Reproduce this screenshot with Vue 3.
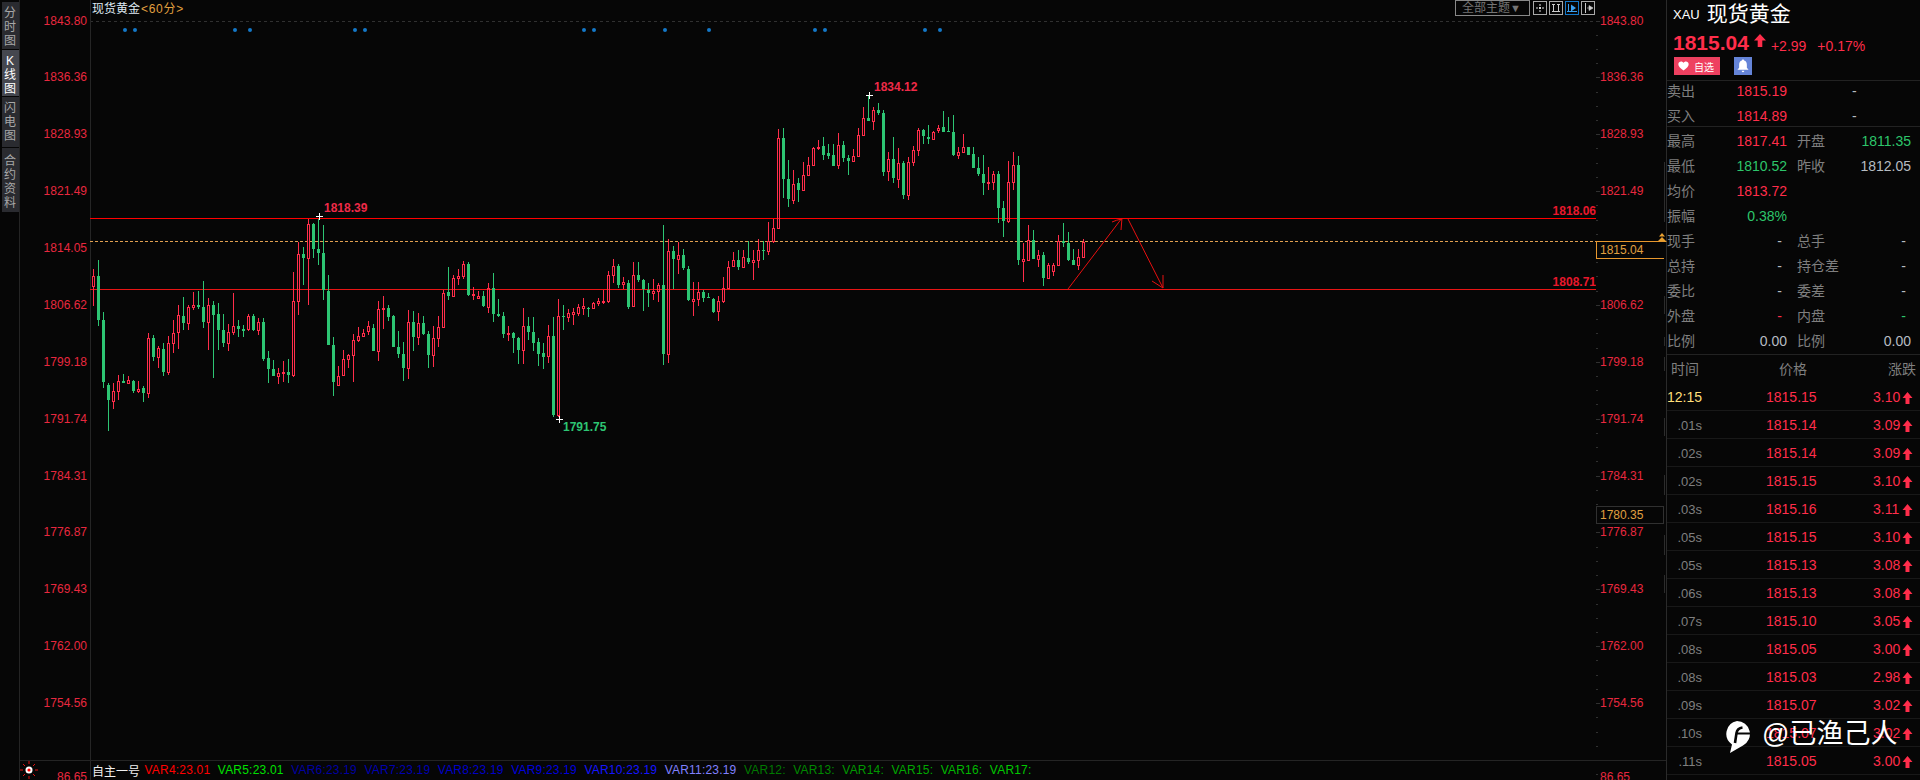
<template>
  <div class="terminal">
    <aside class="tabs">
      <div
        v-for="tab in tabs"
        :key="tab.text"
        class="tab"
        :class="{ active: tab.active, wide: tab.wide }"
        :style="{ height: tab.height + 'px' }"
      >{{ tab.text }}</div>
    </aside>

    <div class="axis axis-left">
      <div v-for="p in priceTicks" :key="p" class="axis-row">{{ p }}</div>
      <div class="axis-tail">86.65</div>
      <svg class="status-dot" width="18" height="18" viewBox="0 0 18 18">
        <circle cx="9" cy="9" r="3.5" fill="#fff" />
        <circle cx="9" cy="9" r="1.6" fill="#f00" />
        <path d="M9 0v3M9 15v3M0 9h3M15 9h3M3 3l2 2M13 13l2 2M15 3l-2 2M5 13l-2 2" stroke="#e01010" fill="none" />
      </svg>
    </div>

    <main class="chart">
      <svg class="plot" width="1506" height="780" viewBox="90 0 1506 780">
        <line x1="90" x2="1596" y1="21.5" y2="21.5" stroke="#303030" stroke-dasharray="3 3" />
        <rect x="90" y="0" width="1" height="780" fill="#252525" />

        <circle v-for="x in signalDots" :key="x" :cx="x" cy="30" r="2" fill="#1478c8" />

        <rect x="90" y="218" width="1506" height="1" fill="#ff0000" />
        <rect x="90" y="289" width="1506" height="1" fill="#e81414" />
        <line x1="90" x2="1596" y1="241.5" y2="241.5" stroke="#e0a050" stroke-dasharray="3 2" />

        <g shape-rendering="crispEdges">
          <g v-for="c in candles" :key="c.x">
            <template v-if="c.up">
              <line :x1="c.x + 0.5" :x2="c.x + 0.5" :y1="c.hi" :y2="c.top" stroke="#ff2d4a" />
              <line :x1="c.x + 0.5" :x2="c.x + 0.5" :y1="c.bot" :y2="c.lo" stroke="#ff2d4a" />
              <rect :x="c.x - 0.5" :y="c.top + 0.5" width="2" :height="c.bot - c.top" fill="none" stroke="#ff2d4a" />
            </template>
            <template v-else>
              <line :x1="c.x + 0.5" :x2="c.x + 0.5" :y1="c.hi" :y2="c.lo" stroke="#2dc573" />
              <rect :x="c.x - 1" :y="c.top" width="3" :height="Math.max(c.bot - c.top, 1)" fill="#2dc573" />
            </template>
          </g>
        </g>

        <g stroke="#e81010" fill="none">
          <path d="M1068 289L1122 218M1112 222Q1116 220 1122 219M1122 218L1121 230" />
          <path d="M1128 219L1163 288M1152 281L1163 288M1163 275V288" />
        </g>

        <g stroke="#fff" shape-rendering="crispEdges">
          <path d="M316 216.500h7M319.500 213v7" />
          <path d="M866 95.500h7M869.500 92v7" />
          <path d="M556 419.500h7M559.500 416v7" />
        </g>

        <rect v-for="t in leftTicks" :key="t.y" :x="90 - t.w" :y="t.y" :width="t.w" height="1" fill="#303030" />

        <text x="324" y="212" class="mark red">1818.39</text>
        <text x="874" y="91" class="mark red">1834.12</text>
        <text x="563" y="431" class="mark green">1791.75</text>
        <text x="1596" y="215" text-anchor="end" class="mark line-label">1818.06</text>
        <text x="1596" y="286" text-anchor="end" class="mark line-label">1808.71</text>
      </svg>

      <div class="chart-title">
        <span class="symbol">现货黄金</span>
        <span class="period">&lt;60分&gt;</span>
      </div>

      <div class="toolbar">
        <div class="theme-btn">全部主题<span class="caret">▼</span></div>
        <svg class="tool" width="14" height="14" viewBox="0 0 14 14">
          <rect x="0.5" y="0.5" width="13" height="13" fill="none" stroke="#aaa" />
          <path d="M7 3v2M7 9v2M3 7h2M9 7h2" stroke="#ddd" />
          <rect x="6" y="6" width="2" height="2" fill="#ddd" />
        </svg>
        <svg class="tool" width="14" height="14" viewBox="0 0 14 14">
          <rect x="0.5" y="0.5" width="13" height="13" fill="none" stroke="#aaa" />
          <path d="M4.500 3v8M9.500 3v8M3 3.500h3M8 3.500h3M3 10.500h8" stroke="#ccc" />
        </svg>
        <svg class="tool" width="14" height="14" viewBox="0 0 14 14">
          <rect x="0.5" y="0.5" width="13" height="13" fill="none" stroke="#1478c8" />
          <path d="M3.500 3v8M2 10.500h10" stroke="#3aa0f0" />
          <path d="M6 3.500l5 3.500-5 3.500z" fill="#3aa0f0" />
        </svg>
        <svg class="tool" width="14" height="14" viewBox="0 0 14 14">
          <rect x="0.5" y="0.5" width="13" height="13" fill="none" stroke="#aaa" />
          <path d="M4.500 2v10" stroke="#ccc" />
          <path d="M6 7h3M8 4.500l4 2.500-4 2.500z" fill="#ccc" stroke="#ccc" stroke-width="0.6" />
        </svg>
      </div>

      <div class="legend">
        <span class="legend-name">自主一号</span>
        <span v-for="v in vars" :key="v.text" :style="{ color: v.color }">{{ v.text }}</span>
      </div>
    </main>

    <div class="axis axis-right">
      <div v-for="p in priceTicks" :key="p" class="axis-row">{{ p }}</div>
      <div class="axis-tail">86.65</div>
      <svg class="axis-ticks" width="4" height="780" viewBox="0 0 4 780">
        <rect v-for="t in rightTicks" :key="t.y" x="0" :y="t.y" :width="t.w" height="1" fill="#303030" />
      </svg>
      <i v-for="s in scaleBars" :key="s.top" class="scale-bar" :style="{ top: s.top + 'px', height: s.height + 'px' }"></i>
      <svg class="now-mark" width="12" height="9" viewBox="0 0 12 9">
        <path d="M6 0l3 3.500H3zM1 9l5-5 5 5z" fill="#e8a030" />
      </svg>
      <div class="price-tag now">1815.04</div>
      <div class="price-tag low">1780.35</div>
    </div>

    <aside class="panel">
      <div class="panel-title">
        <span class="code">XAU</span>
        <span class="name">现货黄金</span>
      </div>
      <div class="panel-price">
        <span class="last">1815.04</span>
        <svg class="last-arrow" width="12" height="13" viewBox="0 0 12 13">
          <path d="M6 0l6 6.500H8.300V13H3.700V6.500H0z" fill="#ff2d4a" />
        </svg>
        <span class="delta">+2.99</span>
        <span class="delta pct">+0.17%</span>
      </div>
      <div class="panel-actions">
        <div class="fav">
          <svg width="11" height="10" viewBox="0 0 16 14">
            <path d="M8 13.500C3 10 .5 7.500.5 4.500.5 2 2.500.5 4.500.5 6 .5 7.300 1.300 8 2.500 8.700 1.300 10 .5 11.500.5c2 0 4 1.500 4 4 0 3-2.500 5.500-7.500 9z" fill="#fff" />
          </svg>
          <span>自选</span>
        </div>
        <div class="bell">
          <svg width="12" height="14" viewBox="0 0 14 15">
            <path d="M7 0c.8 0 1.300.5 1.300 1.200C10.500 1.800 11.500 3.700 11.500 6v3.500L13.500 12H.5l2-2.500V6c0-2.300 1-4.200 3.200-4.800C5.700.5 6.200 0 7 0zM5.500 13h3c0 1-.6 1.700-1.500 1.700S5.500 14 5.500 13z" fill="#fff" />
          </svg>
        </div>
      </div>

      <div class="quote-block top">
        <div v-for="r in bidAsk" :key="r.label" class="quote-row">
          <div class="cell">
            <span class="label">{{ r.label }}</span>
            <span :class="r.cls">{{ r.value }}</span>
          </div>
          <div class="cell dash-cell"><span class="muted">-</span></div>
        </div>
      </div>

      <div class="quote-block">
        <div v-for="r in stats" :key="r[0]" class="quote-row">
          <div class="cell">
            <span class="label">{{ r[0] }}</span>
            <span :class="[r[2], { pad: r[1] === '-' }]">{{ r[1] }}</span>
          </div>
          <div v-if="r[3]" class="cell">
            <span class="label">{{ r[3] }}</span>
            <span :class="[r[5], { pad: r[4] === '-' }]">{{ r[4] }}</span>
          </div>
        </div>
      </div>

      <div class="trade-head">
        <span class="th-time">时间</span>
        <span class="th-price">价格</span>
        <span class="th-change">涨跌</span>
      </div>
      <div v-for="(t, i) in trades" :key="i" class="trade-row">
        <span class="t-time" :class="{ clock: i === 0 }">{{ t[0] }}</span>
        <span class="t-price">{{ t[1] }}</span>
        <span class="t-change">{{ t[2] }}</span>
        <svg class="t-arrow" width="11" height="12" viewBox="0 0 10 12">
          <path d="M5 0l5 6H7v6H3V6H0z" fill="#ff2d4a" />
        </svg>
      </div>
    </aside>

    <div class="footer-line"></div>

    <div class="watermark">
      <svg width="28" height="34" viewBox="0 0 28 34">
        <path d="M14 1a13 13 0 0 1 6 24.500L7 33l2-8.500A13 13 0 0 1 14 1z" fill="#fff" />
        <path d="M12 23l1.500-10c.5-3 2.500-5 6-5.500" fill="none" stroke="#060606" stroke-width="2.600" />
        <path d="M13 13.500h14" stroke="#060606" stroke-width="2" />
      </svg>
      <span>@已渔己人</span>
    </div>
  </div>
</template>

<script setup>
import { computed } from 'vue'

const tabs = [
  { text: '分时图', height: 47 },
  { text: 'K线图', height: 46, active: true },
  { text: '闪电图', height: 50 },
  { text: '合约资料', height: 64, wide: true }
]

const priceTicks = [
  '1843.80', '1836.36', '1828.93', '1821.49', '1814.05', '1806.62', '1799.18',
  '1791.74', '1784.31', '1776.87', '1769.43', '1762.00', '1754.56'
]

const signalDots = [125, 135, 235, 250, 355, 365, 584, 594, 665, 709, 815, 825, 925, 940]

const vars = [
  { text: 'VAR4:23.01', color: '#ff0000' },
  { text: 'VAR5:23.01', color: '#00e000' },
  { text: 'VAR6:23.19', color: '#0000a0' },
  { text: 'VAR7:23.19', color: '#0000b0' },
  { text: 'VAR8:23.19', color: '#0000c8' },
  { text: 'VAR9:23.19', color: '#0000dc' },
  { text: 'VAR10:23.19', color: '#1414ff' },
  { text: 'VAR11:23.19', color: '#8080ff' },
  { text: 'VAR12:', color: '#007800' },
  { text: 'VAR13:', color: '#008800' },
  { text: 'VAR14:', color: '#009800' },
  { text: 'VAR15:', color: '#00a800' },
  { text: 'VAR16:', color: '#00b800' },
  { text: 'VAR17:', color: '#00c800' }
]

const bidAsk = [
  { label: '卖出', value: '1815.19', cls: 'red' },
  { label: '买入', value: '1814.89', cls: 'red' }
]

const stats = [
  ['最高', '1817.41', 'red', '开盘', '1811.35', 'green'],
  ['最低', '1810.52', 'green', '昨收', '1812.05', 'plain'],
  ['均价', '1813.72', 'red'],
  ['振幅', '0.38%', 'green'],
  ['现手', '-', 'plain', '总手', '-', 'plain'],
  ['总持', '-', 'plain', '持仓差', '-', 'plain'],
  ['委比', '-', 'plain', '委差', '-', 'plain'],
  ['外盘', '-', 'red', '内盘', '-', 'green'],
  ['比例', '0.00', 'plain', '比例', '0.00', 'plain']
]

const trades = [
  ['12:15', '1815.15', '3.10'],
  ['.01s', '1815.14', '3.09'],
  ['.02s', '1815.14', '3.09'],
  ['.02s', '1815.15', '3.10'],
  ['.03s', '1815.16', '3.11'],
  ['.05s', '1815.15', '3.10'],
  ['.05s', '1815.13', '3.08'],
  ['.06s', '1815.13', '3.08'],
  ['.07s', '1815.10', '3.05'],
  ['.08s', '1815.05', '3.00'],
  ['.08s', '1815.03', '2.98'],
  ['.09s', '1815.07', '3.02'],
  ['.10s', '1815.07', '3.02'],
  ['.11s', '1815.05', '3.00']
]

const scaleBars = [
  { top: 162, height: 60 },
  { top: 296, height: 18 },
  { top: 337, height: 9 },
  { top: 357, height: 14 },
  { top: 418, height: 18 },
  { top: 475, height: 20 },
  { top: 535, height: 20 },
  { top: 575, height: 18 }
]

// candle rows: type, high, body top, body bottom, low, read off the chart at 3x
const firstStretch = [
  ['r',207,228,258,318],['g',180,228,360,378],['g',336,360,546,564],['g',549,555,600,693],
  ['r',549,573,603,627],['r',525,543,572,600],['g',522,543,549,549],['r',528,540,549,552],
  ['g',540,543,573,579],['r',543,567,573,579],['g',558,564,579,606],['r',399,414,579,594],
  ['g',405,414,471,483],['r',438,444,471,504],['g',429,447,516,528],['r',408,429,516,525],
  ['r',360,399,429,459],['r',315,345,396,447],['g',291,348,369,390],['r',315,321,369,390],
  ['r',276,315,321,330],['g',273,315,321,327],['g',243,321,366,384],['r',294,315,366,450],
  ['g',303,315,345,534],['g',309,342,390,450],['g',342,390,429,441],['r',372,396,429,453],
  ['r',279,378,396,405],['g',360,378,387,411],['g',375,387,393,411],['r',342,348,387,393],
  ['g',342,348,390,393],['r',354,366,390,405],['g',354,366,477,483],['g',453,474,507,549],
  ['g',480,507,528,528],['r',504,519,528,552],['r',483,516,519,546],['g',477,516,525,549],
  ['r',216,303,525,531],['r',126,162,303,345],['g',141,162,174,255],['r',57,72,174,315],
  ['g',69,72,147,174],['g',57,147,159,195],['g',75,159,270,300],['g',225,273,435,435],
  ['g',411,435,546,588],['r',498,528,555,555],['r',450,477,525,525],['r',462,465,477,504],
  ['r',402,420,465,546],['r',381,408,420,426],['r',387,399,408,411],['r',363,378,393,405],
  ['g',372,384,453,453],['r',303,327,453,483],['r',288,324,327,387],['g',315,324,351,363],
  ['g',345,348,441,441],['g',393,441,462,474],['g',426,462,504,543],['r',330,366,504,537],
  ['g',333,366,411,453],['r',339,369,411,435],['g',348,369,402,405],['g',393,402,465,504],
  ['r',378,414,465,501],['r',348,381,414,441],['r',270,279,381,381],['g',201,276,288,300],
  ['r',225,234,288,288],['r',207,228,234,255],['r',183,192,228,237],['g',186,192,285,288],
  ['r',261,282,285,300],['r',273,288,294,294],['g',273,288,318,321],['r',249,264,321,339],
  ['g',219,264,342,366],['g',297,342,348,351],['g',336,348,402,414],['r',378,399,402,423],
  ['g',396,399,414,459],['g',411,414,450,492],['r',324,378,450,492],['g',351,378,396,420],
  ['g',351,396,429,453],['g',414,426,462,498],['g',429,459,471,507],['r',375,408,468,489],
  ['g',351,408,645,651],['r',297,348,645,651],['g',315,348,351,390],['r',327,339,351,366],
  ['r',324,336,342,375],['r',312,321,339,348],['r',294,318,324,345],['g',321,323,325,351],
  ['r',306,309,324,327],['r',294,303,309,318],['r',270,303,306,312],['r',213,225,303,309],
  ['r',177,198,225,249],['g',192,198,255,264],['r',231,246,252,267],['g',240,249,321,327],
  ['r',186,225,318,321],['g',186,225,240,246],['g',237,240,267,333],['g',249,270,279,321],
  ['r',237,273,279,300],['r',249,255,273,306],['g',75,255,462,495],['r',117,153,462,489],
  ['g',138,153,177,267],['r',126,165,177,222],['g',147,165,204,210],['g',198,207,300,303],
  ['r',246,297,303,348],['r',246,276,297,318],['g',270,276,294,306],['g',279,291,293,294],
  ['g',294,297,336,339],['r',288,303,333,363]
]

const secondStretch = [
  ['r',591,624,663,669],['r',543,561,624,627],['r',516,540,558,558],['g',510,540,561,570],
  ['r',510,531,561,561],['g',483,534,546,552],['r',510,540,546,600],['r',477,510,540,564],
  ['g',483,511,513,540],['r',426,483,513,525],['r',417,444,483,489],['r',147,174,444,447],
  ['g',144,174,297,354],['g',240,297,357,381],['r',270,312,360,372],['g',294,309,330,366],
  ['r',246,285,330,330],['r',231,255,285,288],['r',201,204,255,255],['r',180,201,204,210],
  ['g',171,198,225,240],['g',192,219,228,237],['g',192,225,258,258],['r',159,195,255,267],
  ['g',183,195,234,246],['g',225,234,243,285],['r',207,228,243,243],['r',144,165,228,231],
  ['r',81,114,165,165],['g',48,114,123,123],['r',81,90,123,150],['g',69,90,99,105],
  ['g',90,99,276,288],['r',216,237,273,303],['g',171,237,294,309],['r',204,249,297,324],
  ['g',243,249,345,357],['r',231,246,345,360],['r',198,210,246,258],['r',144,150,210,228],
  ['g',147,150,168,192],['g',135,171,177,192],['r',153,156,177,177],['r',135,144,150,159],
  ['g',93,141,156,156],['g',111,153,156,156],['g',105,156,225,228],['r',201,216,225,237],
  ['r',162,201,216,216],['g',201,201,225,225],['g',201,222,264,264],['g',231,264,282,288],
  ['g',225,282,309,345],['r',261,306,309,330],['r',273,282,306,330],['g',273,282,384,429],
  ['g',363,384,423,471],['r',243,306,423,429],['r',216,255,306,330],['g',228,255,540,555],
  ['r',489,537,543,606],['r',435,480,540,543],['g',450,480,537,537],['r',510,525,537,561],
  ['g',516,525,594,618],['r',549,555,594,594],['r',549,555,573,588],['r',465,483,555,555],
  ['g',429,483,489,501],['g',456,489,540,543],['g',507,540,555,555],['r',507,531,555,570],
  ['r',477,486,531,531]
]

const toCandle = (row, index, originY) => {
  const py = (z) => Math.round(originY + z / 3)
  return {
    x: 93 + index * 5,
    up: row[0] === 'r',
    hi: py(row[1]),
    top: py(row[2]),
    bot: py(row[3]),
    lo: py(row[4])
  }
}

const candles = computed(() => [
  ...firstStretch.map((row, i) => toCandle(row, i, 200)),
  ...secondStretch.map((row, i) => toCandle(row, i + firstStretch.length, 80))
])

const axisTicks = () => {
  const list = []
  for (let i = 0; i < 54; i++) {
    list.push({ y: Math.round(20.5 + i * 14.22), w: i % 4 === 0 ? 4 : 2 })
  }
  return list
}
const leftTicks = axisTicks()
const rightTicks = axisTicks()
</script>

<style>
html,
body {
  margin: 0;
  background: #060606;
}
</style>

<style scoped>
.terminal {
  position: relative;
  display: flex;
  width: 1920px;
  height: 780px;
  overflow: hidden;
  background: #060606;
  font-family: "Liberation Sans", "Noto Sans CJK SC", sans-serif;
}

.tabs {
  width: 17px;
  margin-left: 2px;
  padding-top: 2px;
  border-right: 1px solid #242424;
  flex: none;
}

.tab {
  box-sizing: border-box;
  width: 17px;
  padding: 4px 1px 0 0;
  margin-bottom: 1px;
  background: #2a2b30;
  color: #a8a8a8;
  font-size: 12px;
  line-height: 14px;
  text-align: center;
  word-break: break-all;
}

.tab.wide {
  padding-top: 6px;
}

.tab.active {
  background: #45474f;
  color: #fff;
}

.axis {
  position: relative;
  width: 70px;
  flex: none;
  color: #e8283f;
  font-size: 12px;
}

.axis-left {
  text-align: right;
  padding-right: 3px;
  width: 67px;
}

.axis-right {
  width: 70px;
  padding-left: 4px;
  box-sizing: border-box;
}

.axis-row {
  height: 56.88px;
  line-height: 56.88px;
  position: relative;
  top: -7.500px;
}

.axis-tail {
  position: relative;
  top: 30px;
  line-height: 16px;
}

.axis-ticks {
  position: absolute;
  left: 0;
  top: 0;
}

.scale-bar {
  position: absolute;
  left: 68px;
  width: 1px;
  background: #2c2c2c;
}

.status-dot {
  position: absolute;
  left: 0;
  top: 761px;
}

.chart {
  position: relative;
  width: 1506px;
  flex: none;
  display: flex;
  flex-direction: column;
}

.plot {
  position: absolute;
  left: 0;
  top: 0;
}

.plot text {
  font-size: 12px;
  font-weight: 700;
}

.plot .red {
  fill: #ee2a48;
}

.plot .green {
  fill: #2dc573;
}

.plot .line-label {
  fill: #e8182c;
}

.chart-title {
  position: relative;
  padding: 1px 0 0 2px;
  font-size: 12px;
  line-height: 16px;
}

.symbol {
  color: #dfe9f2;
}

.period {
  color: #e0a040;
  font-size: 12px;
  letter-spacing: 0.7px;
  margin-left: 1px;
}

.toolbar {
  position: absolute;
  right: 1px;
  top: 0;
  display: flex;
  align-items: flex-start;
  gap: 2px;
}

.theme-btn {
  box-sizing: border-box;
  width: 75px;
  height: 16px;
  margin-right: 1px;
  border: 1px solid #888;
  color: #757575;
  font-size: 12px;
  line-height: 14px;
  padding-left: 6px;
  white-space: nowrap;
}

.caret {
  font-size: 11px;
}

.tool {
  margin-top: 1px;
}

.legend {
  position: relative;
  margin-top: auto;
  height: 20px;
  display: flex;
  align-items: center;
  gap: 7.500px;
  padding-left: 2px;
  font-size: 12px;
  letter-spacing: 0.2px;
  white-space: nowrap;
}

.legend-name {
  color: #f0f0f0;
  margin-right: -3px;
  letter-spacing: 0;
}

.price-tag {
  position: absolute;
  left: 0;
  box-sizing: border-box;
  width: 68px;
  height: 18px;
  line-height: 16px;
  padding-left: 3px;
  color: #e0a040;
  background: #060606;
  font-size: 12px;
}

.price-tag.now {
  top: 241px;
  border: 1px solid #e8982e;
  border-right: none;
}

.price-tag.low {
  top: 506px;
  border: 1px solid #303030;
  line-height: 17px;
}

.now-mark {
  position: absolute;
  left: 60px;
  top: 233px;
}

.panel {
  width: 254px;
  box-sizing: border-box;
  border-left: 1px solid #2a2a2a;
  flex: none;
  font-size: 14px;
  color: #7f7f7f;
}

.panel-title {
  height: 28px;
  display: flex;
  align-items: center;
  gap: 7px;
  padding-left: 6px;
  color: #fff;
}

.code {
  font-size: 13px;
}

.name {
  font-size: 21px;
  line-height: 1;
  margin-top: -2px;
}

.panel-price {
  height: 28px;
  display: flex;
  align-items: center;
  padding-left: 6px;
  color: #ff2d4a;
}

.last {
  font-size: 21px;
  font-weight: 700;
  margin-top: 2px;
}

.last-arrow {
  margin: -4px 0 0 5px;
}

.delta {
  font-size: 14px;
  margin: 8px 0 0 5px;
}

.delta.pct {
  margin-left: 11px;
}

.panel-actions {
  height: 18px;
  padding: 1px 0 0 7px;
  margin-bottom: 5px;
  display: flex;
  gap: 14px;
}

.fav {
  width: 46px;
  height: 18px;
  display: flex;
  align-items: center;
  gap: 5px;
  padding-left: 4px;
  box-sizing: border-box;
  background: #ee4060;
  color: #fff;
  font-size: 10px;
}

.bell {
  width: 18px;
  height: 18px;
  display: flex;
  align-items: center;
  justify-content: center;
  background: #6584d8;
}

.quote-block {
  padding-top: 2px;
  border-bottom: 1px solid #222;
}

.quote-block.top {
  height: 47px;
  box-sizing: border-box;
  padding-top: 0;
  border-top: 1px solid #222;
}

.quote-block.top .quote-row:first-child {
  margin-top: -2px;
}

.quote-row {
  height: 25px;
  line-height: 25px;
  display: flex;
  gap: 10px;
}

.cell {
  width: 120px;
  display: flex;
  justify-content: space-between;
  flex: none;
}

.cell + .cell {
  width: 114px;
}

.dash-cell {
  justify-content: flex-start;
  padding-left: 55px;
  box-sizing: border-box;
}

.pad {
  padding-right: 5px;
}

.label {
  color: #7f7f7f;
}

.red {
  color: #ff2d4a;
}

.green {
  color: #2dc56b;
}

.plain,
.muted {
  color: #b6bcc2;
}

.trade-head {
  height: 28px;
  line-height: 28px;
  position: relative;
  color: #7f7f7f;
}

.th-time {
  position: absolute;
  left: 4px;
}

.th-price {
  position: absolute;
  left: 112px;
}

.th-change {
  position: absolute;
  right: 4px;
}

.trade-row {
  box-sizing: border-box;
  height: 28px;
  line-height: 29px;
  display: flex;
  align-items: flex-start;
  border-bottom: 1px solid #181818;
  color: #ff2d4a;
}

.t-time {
  width: 35px;
  color: #7f7f7f;
  font-size: 13px;
  text-align: right;
  flex: none;
}

.t-time.clock {
  color: #ffdf7a;
  font-size: 14px;
}

.t-price {
  margin-left: 64px;
  width: 50px;
  text-align: right;
  flex: none;
}

.t-change {
  margin-left: 57px;
  width: 26px;
  text-align: right;
  flex: none;
}

.t-arrow {
  margin: 9px 0 0 3px;
}

.footer-line {
  position: absolute;
  left: 19px;
  top: 760px;
  width: 1647px;
  height: 1px;
  background: #242424;
}

.watermark {
  position: absolute;
  left: 1723px;
  top: 714px;
  display: flex;
  align-items: center;
  gap: 11px;
  color: #fff;
  font-size: 27px;
  line-height: 36px;
}

.watermark svg {
  margin-top: 6px;
}
</style>
